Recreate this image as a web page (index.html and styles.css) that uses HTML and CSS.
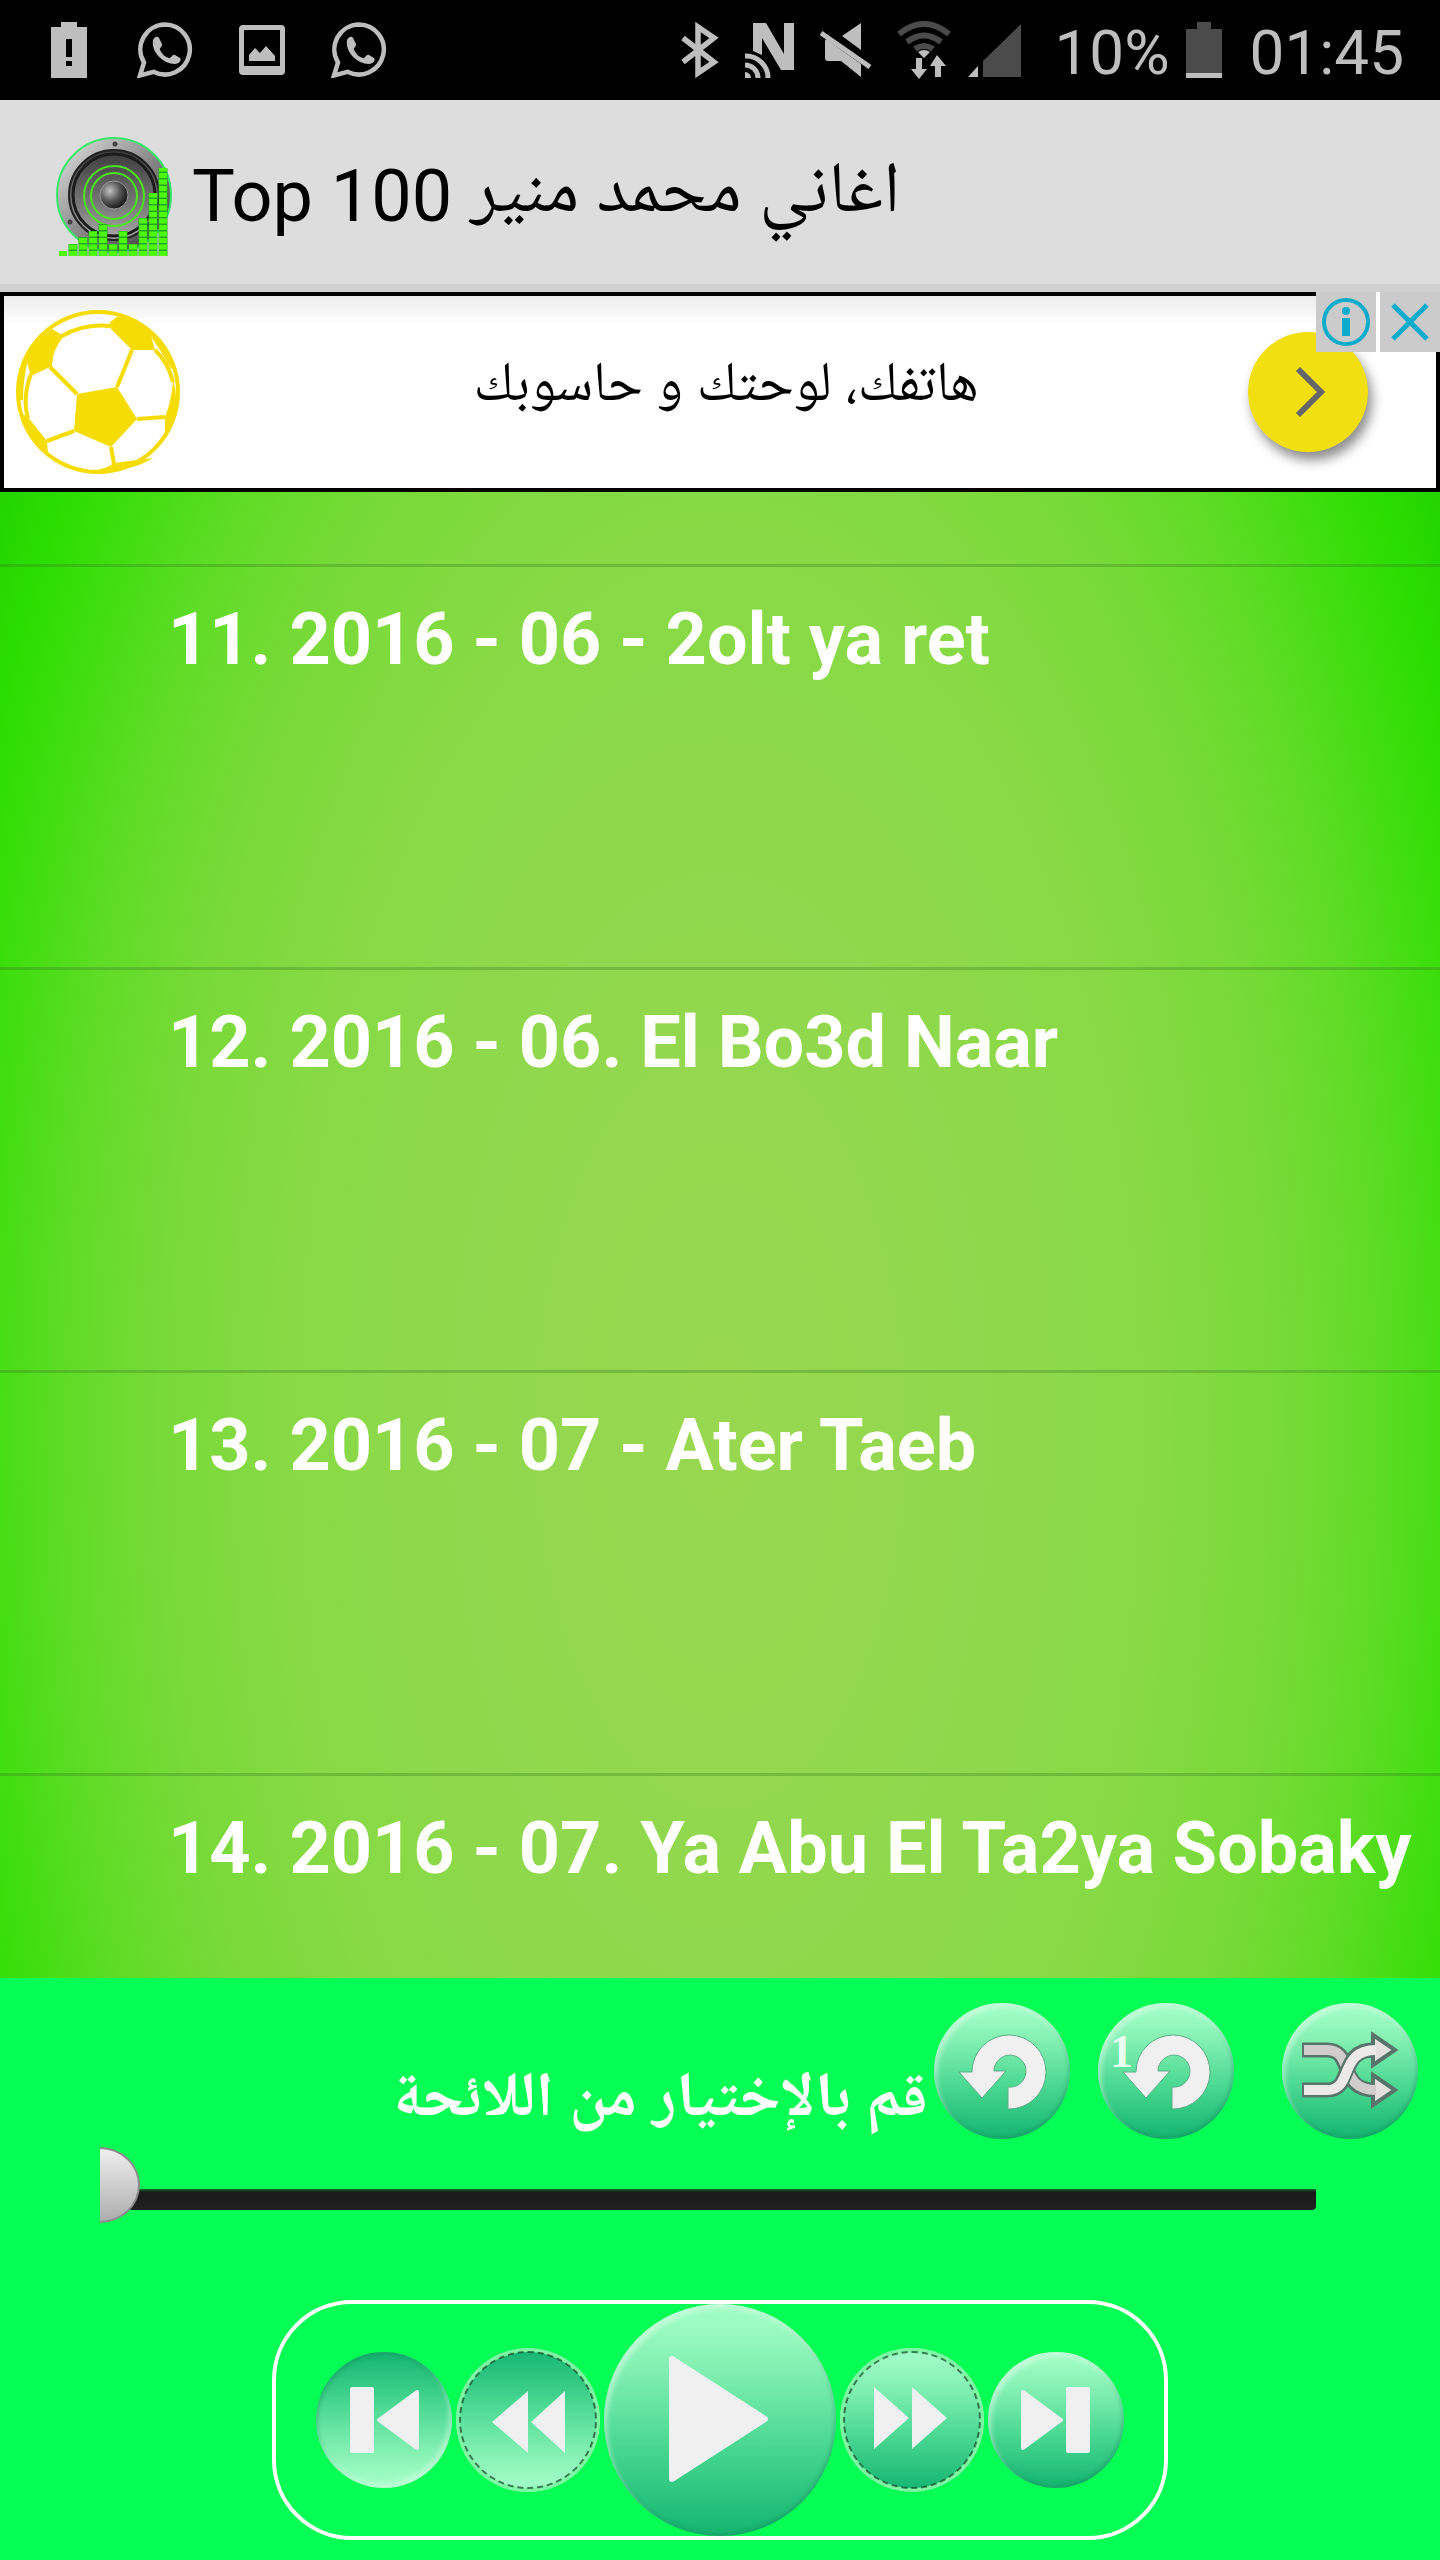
FILE: index.html
```
<!DOCTYPE html>
<html lang="ar">
<head>
<meta charset="utf-8">
<meta name="viewport" content="width=device-width">
<title>Top 100 اغاني محمد منير</title>
<link rel="stylesheet" href="styles.css">
</head>
<body>
<svg width="0" height="0" class="defs" aria-hidden="true">
  <defs>
    <symbol id="whatsapp" viewBox="0 0 56 56">
      <path d="M28 2.500a25 25 0 1 1-11.500 47.300L3 53.500 7 40.500A25 25 0 0 1 28 2.500Z" fill="none" stroke="#bebebe" stroke-width="4.500"/>
      <path d="M16 18c2-4 5-4 6-2l3 6c1 2-3 4-2 6 2 4 5 7 9 8 2 1 3-4 6-3l5 3c2 2-1 6-5 6-12 0-24-12-22-24Z" fill="#bebebe"/>
    </symbol>
    <symbol id="repeat" viewBox="0 0 136 136">
      <path d="M74 106V84A16 16 0 1 0 60 68H72L48 95 25 69H38A37 37 0 1 1 74 106Z" fill="#f1f0f1" stroke="#5fae86" stroke-width="1"/>
    </symbol>
    <linearGradient id="metal" x1="0" y1="0" x2="1" y2="1"><stop offset="0" stop-color="#e4e4e4"/><stop offset=".5" stop-color="#8a8a8a"/><stop offset="1" stop-color="#333"/></linearGradient>
    <linearGradient id="cone" x1="0" y1="0" x2="0" y2="1"><stop offset="0" stop-color="#3a3a3a"/><stop offset=".6" stop-color="#777"/><stop offset="1" stop-color="#aaa"/></linearGradient>
    <radialGradient id="dome" cx=".35" cy=".35" r=".7"><stop offset="0" stop-color="#c4c4c4"/><stop offset=".5" stop-color="#5c5c5c"/><stop offset="1" stop-color="#111"/></radialGradient>
  </defs>
</svg>
<div class="screen">
  <div class="status">
    <div class="status-group notices">
      <svg width="40" height="56" viewBox="0 0 40 56"><path d="M0 5h10V0h16v5h10v51H0Z" fill="#bebebe"/><path d="M15 17h6v18h-6zM15 39h6v5h-6z"/></svg>
      <svg width="56" height="56"><use href="#whatsapp"/></svg>
      <svg width="46" height="56" viewBox="0 0 46 56"><path fill-rule="evenodd" d="M4 3h38a4 4 0 0 1 4 4v42a4 4 0 0 1-4 4H4a4 4 0 0 1-4-4V7a4 4 0 0 1 4-4ZM5 8v36h36V8Z" fill="#bebebe"/><path d="M10 39v-6l6-7 5 5 6-7 9 10v5Z" fill="#bebebe"/></svg>
      <svg width="56" height="56"><use href="#whatsapp"/></svg>
    </div>
    <div class="status-group system">
      <div class="status-group radios">
        <svg width="40" height="56" viewBox="0 0 40 56"><path d="M3 16 34 40 18 51V5L34 16 3 40" fill="none" stroke="#bebebe" stroke-width="5.500"/></svg>
        <svg width="52" height="56" viewBox="0 0 52 56"><path d="M9 1h13l18 31V1h10v47H37L18 16v17L9 29Z" fill="#bebebe"/><g fill="none" stroke="#bebebe" stroke-width="5"><path d="M1 34a22 22 0 0 1 23 22M1 43a13 13 0 0 1 13 13"/></g><path d="M1 50a6 6 0 0 1 6 6H1Z" fill="#bebebe"/></svg>
        <svg width="52" height="56" viewBox="0 0 52 56"><path d="M41 1v27L22 14ZM6 17l35 25v13L21 39H8q-3 0-3-3V19Z" fill="#bebebe"/><path d="M1 11 50 45" stroke="#bebebe" stroke-width="5"/></svg>
        <svg width="56" height="58" viewBox="0 0 56 58"><g fill="none" stroke="#4b4b4b" stroke-width="6"><path d="M3 13q25-20 50 0M11 21q17-13 34 0M19 28q9-6 18 0"/></g><path d="M22 31q6-4 12 0l-6 6ZM20 37h6v11h5l-8 10-8-10h5ZM41 34l9 11h-5v11h-6V45h-5Z" fill="#bebebe"/></svg>
      </div>
      <svg width="54" height="56" viewBox="0 0 54 56"><path d="M10 44v11H0Z" fill="#bebebe"/><path d="M53 2v53H15V39Z" fill="#4b4b4b"/></svg>
      <span class="percent">10%</span>
      <svg width="36" height="56" viewBox="0 0 36 56"><path d="M0 7h11V0h14v7h11v44H0Z" fill="#4b4b4b"/><path d="M0 51h36v5H0Z" fill="#bebebe"/></svg>
      <span class="clock">01:45</span>
    </div>
  </div>

  <header class="bar">
    <svg width="120" height="124" viewBox="0 0 120 124">
      <circle cx="60" cy="60" r="57" fill="url(#metal)" stroke="#35e86a" stroke-width="2"/>
      <circle cx="60" cy="60" r="45" fill="url(#cone)" stroke="#222" stroke-width="2"/>
      <circle cx="60" cy="60" r="41" fill="none" stroke="#1c1c1c" stroke-width="3"/>
      <circle cx="61" cy="9" r="2.500" fill="#444"/><circle cx="16" cy="87" r="2.500" fill="#444"/>
      <g fill="none" stroke="#4be61c" stroke-width="2"><circle cx="60" cy="61" r="30"/><circle cx="60" cy="61" r="23"/></g>
      <circle cx="60" cy="60" r="14" fill="url(#dome)" stroke="#999" stroke-width="1"/>
      <g stroke="#22a91f" stroke-width="9"><path d="M19 121v-12M29 121v-19M39 121v-25M49 121v-32M59 121v-12M69 121v-25M79 121v-12M89 121v-38M99 121V58M109 121V33"/></g>
      <g stroke="#4dfa0c" stroke-width="8" stroke-dasharray="5 1.500"><path d="M9 121v-6M19 121v-12M29 121v-19M39 121v-25M49 121v-32M59 121v-12M69 121v-25M79 121v-12M89 121v-38M99 121V58M109 121V33"/></g>
    </svg>
    <h1 class="title" dir="ltr">Top 100 اغاني محمد منير</h1>
  </header>

  <section class="ad">
    <svg class="ball" width="164" height="164" viewBox="0 0 164 164">
      <g fill="#f5dc05">
        <path d="M61 84 101 77 121 109 95 137 58 121ZM36 19 48 26Q36 40 36 56L15 66 10 49Q18 31 36 19ZM94 12 104 5Q122 8 134 22L139 40H116L95 19ZM157 69Q166 100 149 125V107Q156 90 157 69ZM11 106 31 131 32 144Q14 130 6 104ZM98 153 137 148Q112 164 72 160Q88 161 98 153Z"/>
      </g>
      <g fill="none" stroke="#f5dc05" stroke-width="4">
        <circle cx="82" cy="82" r="80"/>
        <path d="M61 84 34 57M101 77 116 40M121 109 149 107M95 137 98 154M58 121 31 131M46 26Q68 13 95 16M139 40Q152 52 157 72M15 64Q6 88 12 108M10 49Q5 70 5 90M134 22Q146 38 157 58"/>
      </g>
    </svg>
    <p class="ad-text" dir="rtl">هاتفك، لوحتك و حاسوبك</p>
    <button class="go" aria-label="Open"><svg width="36" height="52" viewBox="0 0 36 52"><path d="M8 3 31 26 8 49" fill="none" stroke="#666" stroke-width="6"/></svg></button>
    <div class="ad-choices">
      <button class="choice" aria-label="Info"><svg width="60" height="60" viewBox="0 0 60 60"><circle cx="30" cy="30" r="22" fill="none" stroke="#0aabcb" stroke-width="4"/><circle cx="30" cy="19" r="4" fill="#0aabcb"/><path d="M26 26h8v18h-8z" fill="#0aabcb"/></svg></button>
      <button class="choice" aria-label="Close"><svg width="60" height="60" viewBox="0 0 60 60"><path d="M13 13 47 47M47 13 13 47" stroke="#0aabcb" stroke-width="5"/></svg></button>
    </div>
  </section>

  <ul class="songs" dir="ltr">
    <li class="song">11. 2016 - 06 - 2olt ya ret</li>
    <li class="song">12. 2016 - 06. El Bo3d Naar</li>
    <li class="song">13. 2016 - 07 - Ater Taeb</li>
    <li class="song">14. 2016 - 07. Ya Abu El Ta2ya Sobaky</li>
  </ul>

  <section class="player">
    <div class="now">
      <label class="now-title" for="seek" dir="rtl">قم بالإختيار من اللائحة</label>
      <div class="modes">
        <button class="orb mode" aria-label="Repeat all"><svg width="136" height="136"><use href="#repeat"/></svg></button>
        <button class="orb mode" aria-label="Repeat one"><svg width="136" height="136" viewBox="0 0 136 136"><use href="#repeat"/><text class="one" x="12" y="64">1</text></svg></button>
      </div>
      <button class="orb mode" aria-label="Shuffle"><svg width="136" height="136" viewBox="0 0 136 136">
        <g fill="none" stroke="#58756a" stroke-width="15"><path d="M20 47H45C72 47 56 87 92 87M20 87H45C72 87 56 47 92 47"/></g>
        <path d="M91 32 113 47 91 62ZM91 72 113 87 91 102Z" fill="#e3e0e0" stroke="#58756a" stroke-width="4"/>
        <path d="M22 47H45C72 47 56 87 94 87" fill="none" stroke="#d2cdcd" stroke-width="10"/>
        <path d="M40 87H45C72 87 56 47 92 47" fill="none" stroke="#58756a" stroke-width="14"/>
        <path d="M22 87H45C72 87 56 47 94 47" fill="none" stroke="#ece9e9" stroke-width="10"/>
      </svg></button>
    </div>
    <div class="seek"><input id="seek" class="seek-input" type="range" min="0" max="100" value="0" dir="ltr"></div>
    <div class="controls" dir="ltr">
      <button class="orb small flipped" aria-label="Previous"><svg width="136" height="136" viewBox="2 2 136 136"><g fill="#f1f0f1" stroke="#f1f0f1" stroke-width="4" stroke-linejoin="round"><path d="M38 39h20v62H38zM65 70 103 42V98Z"/></g></svg></button>
      <button class="orb ringed flipped" aria-label="Rewind"><svg width="144" height="144" viewBox="0 0 144 144"><path d="M36 74 72 43V105ZM75 74 109 43V105Z" fill="#f1f0f1"/></svg></button>
      <button class="orb large" aria-label="Play"><svg width="232" height="232" viewBox="2 2 232 232"><path d="M70 57V177L163 117Z" fill="#f1f0f1" stroke="#f1f0f1" stroke-width="6" stroke-linejoin="round"/></svg></button>
      <button class="orb ringed" aria-label="Fast forward"><svg width="144" height="144" viewBox="0 0 144 144"><path d="M34 39V101L69 70ZM72 39V101L107 70Z" fill="#f1f0f1"/></svg></button>
      <button class="orb small" aria-label="Next"><svg width="136" height="136" viewBox="2 2 136 136"><g fill="#f1f0f1" stroke="#f1f0f1" stroke-width="4" stroke-linejoin="round"><path d="M37 42V98L75 70ZM82 39h20v62H82z"/></g></svg></button>
    </div>
  </section>
</div>
</body>
</html>
```
FILE: styles.css
```
* { box-sizing: border-box; }

body {
  margin: 0;
  background: #000;
  font-family: Roboto, "Noto Naskh Arabic UI", "Noto Naskh Arabic", sans-serif;
}

button {
  display: block;
  padding: 0;
  border: 0;
  background: none;
}

svg { display: block; flex: none; }

.defs { position: absolute; }

.screen {
  display: flex;
  flex-direction: column;
  height: 100vh;
  direction: ltr;
}

/* Status bar */
.status {
  display: flex;
  justify-content: space-between;
  align-items: center;
  height: 100px;
  padding: 0 36px 0 51px;
  color: #bebebe;
  font-size: 62px;
  line-height: 72px;
}

.status-group { display: flex; align-items: center; }
.notices { gap: 46px; }
.system { gap: 16px; }
.radios { gap: 24px; }
.percent { padding: 6px 0 0 16px; }
.clock { padding: 6px 0 0 12px; }

/* App bar */
.bar {
  display: flex;
  align-items: center;
  gap: 18px;
  height: 192px;
  padding: 10px 54px 0;
  background: #ddd;
  border-bottom: 8px solid #d0d0d0;
}

.title {
  margin: 0;
  font-size: 72px;
  font-weight: 400;
  line-height: 84px;
  white-space: nowrap;
}

/* Banner */
.ad {
  position: relative;
  display: flex;
  align-items: center;
  justify-content: space-between;
  height: 200px;
  padding: 0 68px 0 12px;
  border: 4px solid #000;
  background: linear-gradient(#ebebeb, #fff 28px);
}

.ad-text {
  margin: 0;
  padding: 0 0 6px 24px;
  font-size: 56px;
  line-height: 84px;
  white-space: nowrap;
}

.go {
  display: grid;
  place-items: center;
  width: 120px;
  height: 120px;
  border-radius: 50%;
  background: #f1df0f;
  box-shadow: 4px 8px 12px rgba(0, 0, 0, .45);
}

.ad-choices {
  position: absolute;
  top: -4px;
  right: -4px;
  display: flex;
  gap: 4px;
  background: #fff;
}

.choice { background: #cbcbcb; }

/* Song list */
.songs {
  flex: 1 1 0;
  min-height: 0;
  margin: 0;
  padding: 72px 0 0;
  overflow: hidden;
  list-style: none;
  background: radial-gradient(ellipse 52% 104% at 50% 63%, #98d850 0%, #90d84d 35%, #86da44 60%, #76da36 76%, #5edc25 88%, #3ede0e 99%, #2bde00 106%, #1ccc00 120%);
}

.song {
  height: 403px;
  padding: 31px 0 0 168px;
  border-top: 3px solid rgba(60, 130, 40, .35);
  color: #fff;
  font-size: 72px;
  font-weight: 700;
  line-height: 84px;
  white-space: nowrap;
}

/* Player */
.player {
  padding: 25px 22px 20px;
  background: #05ff54;
}

.now {
  display: flex;
  align-items: center;
  justify-content: flex-end;
  gap: 48px;
}

.modes { display: flex; gap: 28px; }

.now-title {
  flex: 1;
  margin-right: -42px;
  padding-top: 64px;
  color: #fff;
  font-size: 63px;
  font-weight: 700;
  line-height: 72px;
  white-space: nowrap;
}

.orb {
  flex: none;
  border-radius: 50%;
  background: linear-gradient(#9dfcc3 8%, #82f0b2 28%, #4bd993 60%, #18b873 96%);
  box-shadow: inset 3px 5px 5px rgba(220, 255, 232, .6), inset -1px -2px 4px rgba(20, 140, 90, .5);
}

.flipped {
  background: linear-gradient(#18b873 4%, #4bd993 40%, #82f0b2 72%, #9dfcc3 92%);
  box-shadow: inset -3px -5px 5px rgba(220, 255, 232, .5), inset 1px 2px 4px rgba(20, 140, 90, .5);
}

.mode { width: 136px; height: 136px; }
.small { width: 136px; height: 136px; }
.large { width: 232px; height: 232px; }

.ringed {
  width: 144px;
  height: 144px;
  outline: 2px dashed rgba(20, 70, 40, .7);
  outline-offset: -5px;
  box-shadow: inset 0 0 0 4px #7df7a4;
}

.one {
  fill: #e8fff0;
  font-family: "Liberation Serif", serif;
  font-size: 46px;
  font-weight: 700;
}

.seek {
  margin: 8px 102px 0 78px;
  overflow: hidden;
}

.seek-input {
  display: block;
  width: calc(100% + 40px);
  height: 76px;
  margin: 0 0 0 -40px;
  appearance: none;
  background: none;
}

.seek-input::-webkit-slider-runnable-track {
  height: 21px;
  margin-top: 28px;
  border-radius: 0 0 4px 4px;
  background: linear-gradient(#176b2e, #1a1a1a 3px, #202020);
}

.seek-input::-webkit-slider-thumb {
  width: 80px;
  height: 76px;
  margin-top: -42px;
  appearance: none;
  border: 2px solid #8a8a8a;
  border-radius: 50%;
  background: linear-gradient(#efefef, #adadad);
}

.controls {
  display: flex;
  align-items: center;
  justify-content: center;
  gap: 4px;
  width: 896px;
  max-width: 100%;
  height: 240px;
  margin: 77px auto 0;
  border: 4px solid #fff;
  border-radius: 80px;
}
```
